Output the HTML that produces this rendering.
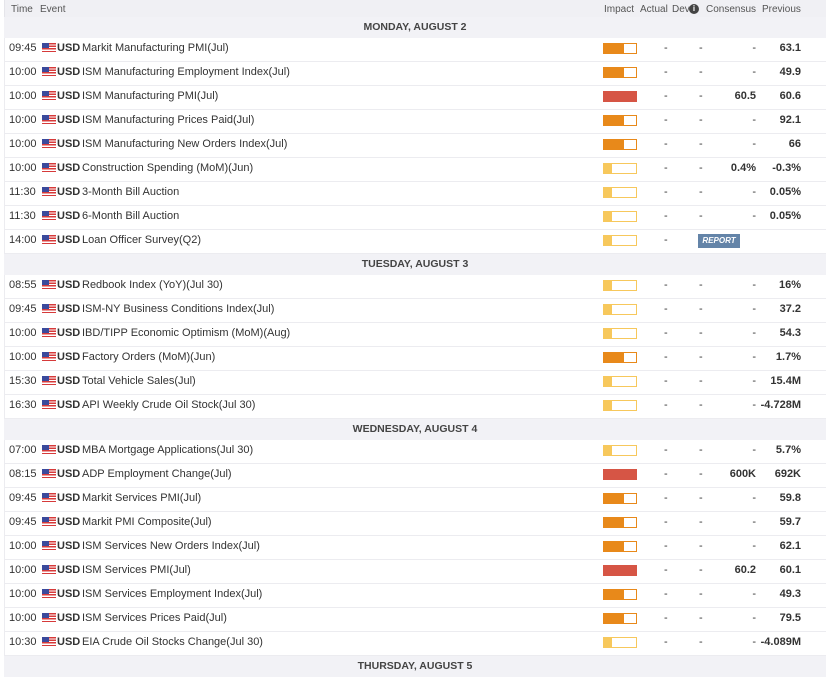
<!DOCTYPE html>
<html><head><meta charset="utf-8"><style>
*{margin:0;padding:0;box-sizing:border-box}
body{width:826px;height:661px;overflow:hidden;background:#fff;font-family:"Liberation Sans",sans-serif;font-size:11px;color:#333;position:relative}
.hdr{position:absolute;left:4px;right:0;top:0;height:17px;background:#f0f0f4;color:#555;font-size:10px;border-left:1px solid #e5e5ea}
.hdr span{position:absolute;top:4px}
.date{position:absolute;left:4px;right:0;height:21px;background:#f2f2f6;text-align:center;font-weight:bold;font-size:10.5px;line-height:21px;color:#444}
.row{position:absolute;left:4px;right:0;height:24px;border-bottom:1px solid #ececf0;border-left:1px solid #ececf0}
.row span{position:absolute;top:3px;line-height:14px}
.t{left:4px}
.fl{left:37px;top:5px!important;width:14px;height:9px;background:repeating-linear-gradient(#d63a3a 0 1.3px,#fff 1.3px 2.6px);}
.fl:before{content:"";position:absolute;left:0;top:0;width:7px;height:5px;background:#3b4a9c}
.u{left:52px;font-weight:bold}
.e{left:77px}
.bar{position:absolute;left:598px;top:5px;width:34px;height:11px;border:1px solid}
.bar i{position:absolute;left:0;top:0;bottom:0;background:currentColor}
.m{color:#e8891a;border-color:#e8891a}.m i{width:20px}
.l{color:#f7c85c;border-color:#f7c85c}.l i{width:8px}
.h{color:#d65545;border-color:#d65545;background:#d65545}
.a{left:659px}.d{left:694px}
.c{right:70px;font-weight:bold}
.p{right:25px;font-weight:bold}
.rep{position:absolute;left:693px;top:4px;width:42px;height:14px;background:#6484a8;color:#fff;font-size:8px;font-weight:bold;font-style:italic;text-align:center;line-height:14px}
</style></head><body>
<div class="hdr"><span style="left:6px">Time</span><span style="left:35px">Event</span><span style="left:599px">Impact</span><span style="left:635px">Actual</span><span style="left:667px">Dev</span><span style="left:684px;width:10px;height:10px;border-radius:50%;background:#444;color:#fff;font-size:8px;text-align:center;line-height:10px;top:4px;font-weight:bold">i</span><span style="left:701px">Consensus</span><span style="left:757px">Previous</span></div>
<div id="c"></div>
<script>
const D=[["MONDAY, AUGUST 2",[["09:45","Markit Manufacturing PMI(Jul)","m","-","63.1"],["10:00","ISM Manufacturing Employment Index(Jul)","m","-","49.9"],["10:00","ISM Manufacturing PMI(Jul)","h","60.5","60.6"],["10:00","ISM Manufacturing Prices Paid(Jul)","m","-","92.1"],["10:00","ISM Manufacturing New Orders Index(Jul)","m","-","66"],["10:00","Construction Spending (MoM)(Jun)","l","0.4%","-0.3%"],["11:30","3-Month Bill Auction","l","-","0.05%"],["11:30","6-Month Bill Auction","l","-","0.05%"],["14:00","Loan Officer Survey(Q2)","l","R",""]]],
["TUESDAY, AUGUST 3",[["08:55","Redbook Index (YoY)(Jul 30)","l","-","16%"],["09:45","ISM-NY Business Conditions Index(Jul)","l","-","37.2"],["10:00","IBD/TIPP Economic Optimism (MoM)(Aug)","l","-","54.3"],["10:00","Factory Orders (MoM)(Jun)","m","-","1.7%"],["15:30","Total Vehicle Sales(Jul)","l","-","15.4M"],["16:30","API Weekly Crude Oil Stock(Jul 30)","l","-","-4.728M"]]],
["WEDNESDAY, AUGUST 4",[["07:00","MBA Mortgage Applications(Jul 30)","l","-","5.7%"],["08:15","ADP Employment Change(Jul)","h","600K","692K"],["09:45","Markit Services PMI(Jul)","m","-","59.8"],["09:45","Markit PMI Composite(Jul)","m","-","59.7"],["10:00","ISM Services New Orders Index(Jul)","m","-","62.1"],["10:00","ISM Services PMI(Jul)","h","60.2","60.1"],["10:00","ISM Services Employment Index(Jul)","m","-","49.3"],["10:00","ISM Services Prices Paid(Jul)","m","-","79.5"],["10:30","EIA Crude Oil Stocks Change(Jul 30)","l","-","-4.089M"]]],
["THURSDAY, AUGUST 5",[]]];
let y=17,h="";
for(const [d,rows] of D){h+=`<div class="date" style="top:${y}px">${d}</div>`;y+=21;
for(const r of rows){let c=r[3]=="R"?`<div class="rep">REPORT</div>`:`<span class="d">-</span><span class="c" style="${r[3]=='-'?'font-weight:normal':''}">${r[3]}</span>`;
h+=`<div class="row" style="top:${y}px"><span class="t">${r[0]}</span><span class="fl"></span><span class="u">USD</span><span class="e">${r[1]}</span><div class="bar ${r[2]}"><i></i></div><span class="a">-</span>${c}<span class="p">${r[4]}</span></div>`;y+=24;}}
document.getElementById("c").innerHTML=h;
</script>
</body></html>
